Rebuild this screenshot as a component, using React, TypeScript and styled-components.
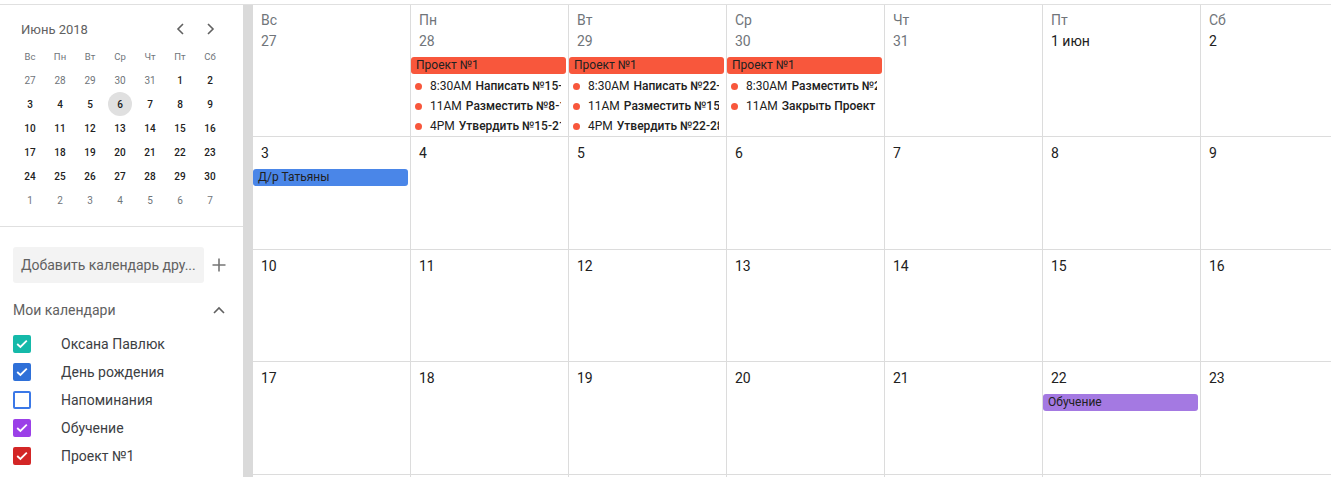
import React from "react";
import styled, { createGlobalStyle } from "styled-components";

const GlobalStyle = createGlobalStyle`
  html, body {
    margin: 0;
    padding: 0;
    background: #fff;
    overflow: hidden;
  }
  body {
    font-family: Roboto, "Noto Sans", Arial, sans-serif;
    color: #3c4043;
  }
`;

const RED = "#f8573c";

type Item = [string, string];
type Bar = { text: string; color: string };
type Day = { label: string; muted?: boolean; bar?: Bar; items?: Item[] };

const weekdays = ["Вс", "Пн", "Вт", "Ср", "Чт", "Пт", "Сб"];

const project: Bar = { text: "Проект №1", color: RED };

const weeks: Day[][] = [
  [
    { label: "27", muted: true },
    {
      label: "28",
      muted: true,
      bar: project,
      items: [
        ["8:30AM", "Написать №15-17"],
        ["11AM", "Разместить №8-14"],
        ["4PM", "Утвердить №15-21"],
      ],
    },
    {
      label: "29",
      muted: true,
      bar: project,
      items: [
        ["8:30AM", "Написать №22-28"],
        ["11AM", "Разместить №15-21"],
        ["4PM", "Утвердить №22-28"],
      ],
    },
    {
      label: "30",
      muted: true,
      bar: project,
      items: [
        ["8:30AM", "Разместить №22-28"],
        ["11AM", "Закрыть Проект №1"],
      ],
    },
    { label: "31", muted: true },
    { label: "1 июн" },
    { label: "2" },
  ],
  [
    { label: "3", bar: { text: "Д/р Татьяны", color: "#4a86e8" } },
    { label: "4" },
    { label: "5" },
    { label: "6" },
    { label: "7" },
    { label: "8" },
    { label: "9" },
  ],
  ["10", "11", "12", "13", "14", "15", "16"].map((label) => ({ label })),
  [
    { label: "17" },
    { label: "18" },
    { label: "19" },
    { label: "20" },
    { label: "21" },
    { label: "22", bar: { text: "Обучение", color: "#a479e2" } },
    { label: "23" },
  ],
  ["24", "25", "26", "27", "28", "29", "30"].map((label) => ({ label })),
];

const miniDays: { d: number; out?: boolean }[][] = [
  [27, 28, 29, 30, 31].map((d) => ({ d, out: true })).concat([{ d: 1 }, { d: 2 }]),
  [3, 4, 5, 6, 7, 8, 9].map((d) => ({ d })),
  [10, 11, 12, 13, 14, 15, 16].map((d) => ({ d })),
  [17, 18, 19, 20, 21, 22, 23].map((d) => ({ d })),
  [24, 25, 26, 27, 28, 29, 30].map((d) => ({ d })),
  [1, 2, 3, 4, 5, 6, 7].map((d) => ({ d, out: true })),
];

const calendars = [
  { name: "Оксана Павлюк", color: "#15b9a9", checked: true },
  { name: "День рождения", color: "#2f70d8", checked: true },
  { name: "Напоминания", color: "#3b78e7", checked: false },
  { name: "Обучение", color: "#9b40e8", checked: true },
  { name: "Проект №1", color: "#d32626", checked: true },
];

/* ---------- layout ---------- */

const Layout = styled.div`
  margin-top: 4px;
  border-top: 1px solid #e0e0e0;
  height: calc(100vh - 5px);
  display: flex;
  overflow: hidden;
`;

const Sidebar = styled.aside`
  width: 243px;
  flex-shrink: 0;
  display: flex;
  flex-direction: column;
`;

const ScrollTrack = styled.div`
  width: 10px;
  flex-shrink: 0;
  background: #dadada;
`;

/* ---------- mini month ---------- */

const MiniMonth = styled.div`
  padding: 12px 0 14px 15px;
  border-bottom: 1px solid #e0e0e0;
`;

const MiniHeader = styled.div`
  height: 24px;
  display: flex;
  align-items: center;
  padding-left: 6px;
  margin-bottom: 3px;
`;

const MonthTitle = styled.span`
  flex: 1;
  font-size: 13px;
  color: #616161;
`;

const NavButtons = styled.div`
  display: flex;
  width: 60px;
  margin-right: 18px;
`;

const NavButton = styled.span`
  width: 30px;
  height: 24px;
  display: flex;
  align-items: center;
  justify-content: center;
`;

const MiniGrid = styled.div`
  display: grid;
  grid-template-columns: repeat(7, 30px);
  grid-auto-rows: 24px;
`;

const MiniHead = styled.span`
  display: flex;
  align-items: center;
  justify-content: center;
  font-size: 9.5px;
  color: #70757a;
`;

const MiniDay = styled.span<{ $out?: boolean; $today?: boolean }>`
  display: flex;
  align-items: center;
  justify-content: center;
  font-size: 10px;
  font-weight: ${(p) => (p.$out ? 400 : 500)};
  color: ${(p) => (p.$out ? "#70757a" : "#212121")};
`;

const DayDisc = styled.span<{ $today?: boolean }>`
  width: 24px;
  height: 24px;
  border-radius: 50%;
  display: flex;
  align-items: center;
  justify-content: center;
  background: ${(p) => (p.$today ? "#e0e0e0" : "transparent")};
`;

/* ---------- calendars list ---------- */

const AddRow = styled.div`
  display: flex;
  align-items: center;
  margin: 20px 0 0 13px;
`;

const AddInput = styled.div`
  width: 191px;
  height: 36px;
  box-sizing: border-box;
  padding-left: 8px;
  display: flex;
  align-items: center;
  background: #f3f3f3;
  border-radius: 3px;
  font-size: 14px;
  color: #616161;
  white-space: nowrap;
`;

const IconSlot = styled.span`
  width: 30px;
  flex-shrink: 0;
  display: flex;
  justify-content: center;
`;

const SectionTitle = styled.div`
  display: flex;
  align-items: center;
  height: 20px;
  margin: 17px 9px 10px 13px;
  font-size: 14px;
  color: #616161;
`;

const SectionLabel = styled.span`
  flex: 1;
`;

const CalRow = styled.label`
  display: flex;
  align-items: center;
  height: 28px;
  padding-left: 13px;
  font-size: 14px;
  color: #3c4043;
`;

const Check = styled.span<{ $color: string; $checked: boolean }>`
  width: 18px;
  height: 18px;
  box-sizing: border-box;
  border-radius: 2px;
  margin-right: 30px;
  display: flex;
  align-items: center;
  justify-content: center;
  background: ${(p) => (p.$checked ? p.$color : "#fff")};
  border: 2px solid ${(p) => p.$color};
`;

/* ---------- month grid ---------- */

const MonthArea = styled.div`
  flex: 1;
  overflow: hidden;
`;

const MonthGrid = styled.div`
  display: grid;
  grid-template-columns: repeat(7, 158px);
  grid-template-rows: 132px 113px 112px 113px 113px;
`;

const Cell = styled.div`
  box-sizing: border-box;
  border-right: 1px solid #dcdcdc;
  border-bottom: 1px solid #dcdcdc;
  padding-top: 7px;
  overflow: hidden;
  min-width: 0;
`;

const Weekday = styled.div`
  padding-left: 8px;
  font-size: 14px;
  line-height: 16px;
  color: #70757a;
  margin-bottom: 4px;
`;

const DateNum = styled.div<{ $muted?: boolean }>`
  padding-left: 8px;
  font-size: 14px;
  line-height: 18px;
  color: ${(p) => (p.$muted ? "#70757a" : "#212121")};
`;

const Events = styled.div`
  margin: 7px 2px 0 0;
`;

const EventBar = styled.div<{ $color: string }>`
  height: 17px;
  line-height: 17px;
  border-radius: 3px;
  padding-left: 5px;
  margin-bottom: 2px;
  background: ${(p) => p.$color};
  font-size: 12px;
  color: #212121;
  white-space: nowrap;
  overflow: hidden;
`;

const EventItem = styled.div`
  display: flex;
  align-items: center;
  height: 20px;
  padding-left: 4px;
  margin-right: 5px;
  font-size: 12px;
  color: #212121;
  white-space: nowrap;
  overflow: hidden;
`;

const EventTitle = styled.span`
  font-weight: 500;
  margin-left: 4px;
`;

const Dot = styled.i`
  width: 7px;
  height: 7px;
  border-radius: 50%;
  background: ${RED};
  flex-shrink: 0;
  margin-right: 8px;
`;

/* ---------- icons ---------- */

const Chevron = ({ dir }: { dir: "left" | "right" | "up" }) => {
  const d =
    dir === "left" ? "M7 1 L2 6 L7 11" : dir === "right" ? "M2 1 L7 6 L2 11" : "M1 7 L6 2 L11 7";
  const size = dir === "up" ? [12, 9] : [9, 12];
  return (
    <svg width={size[0]} height={size[1]} viewBox={`0 0 ${size[0]} ${size[1]}`}>
      <path d={d} fill="none" stroke="#616161" strokeWidth="1.6" />
    </svg>
  );
};

const Plus = () => (
  <svg width="14" height="14" viewBox="0 0 14 14">
    <path d="M7 0.5 V13.5 M0.5 7 H13.5" stroke="#757575" strokeWidth="1.6" />
  </svg>
);

const Tick = () => (
  <svg width="12" height="10" viewBox="0 0 12 10">
    <path d="M1.2 5 L4.4 8 L10.8 1.6" fill="none" stroke="#fff" strokeWidth="1.8" />
  </svg>
);

export default function App() {
  return (
    <>
      <GlobalStyle />
      <Layout>
        <Sidebar>
          <MiniMonth>
            <MiniHeader>
              <MonthTitle>Июнь 2018</MonthTitle>
              <NavButtons>
                <NavButton>
                  <Chevron dir="left" />
                </NavButton>
                <NavButton>
                  <Chevron dir="right" />
                </NavButton>
              </NavButtons>
            </MiniHeader>
            <MiniGrid>
              {weekdays.map((w) => (
                <MiniHead key={w}>{w}</MiniHead>
              ))}
              {miniDays.map((row, r) =>
                row.map((c, i) => (
                  <MiniDay key={`${r}-${i}`} $out={c.out}>
                    <DayDisc $today={r === 1 && c.d === 6}>{c.d}</DayDisc>
                  </MiniDay>
                ))
              )}
            </MiniGrid>
          </MiniMonth>

          <AddRow>
            <AddInput>Добавить календарь дру...</AddInput>
            <IconSlot>
              <Plus />
            </IconSlot>
          </AddRow>

          <SectionTitle>
            <SectionLabel>Мои календари</SectionLabel>
            <IconSlot>
              <Chevron dir="up" />
            </IconSlot>
          </SectionTitle>

          {calendars.map((c) => (
            <CalRow key={c.name}>
              <Check $color={c.color} $checked={c.checked}>
                {c.checked && <Tick />}
              </Check>
              {c.name}
            </CalRow>
          ))}
        </Sidebar>

        <ScrollTrack />

        <MonthArea>
          <MonthGrid>
            {weeks.map((week, r) =>
              week.map((day, i) => (
                <Cell key={`${r}-${i}`}>
                  {r === 0 && <Weekday>{weekdays[i]}</Weekday>}
                  <DateNum $muted={day.muted}>{day.label}</DateNum>
                  {(day.bar || day.items) && (
                    <Events>
                      {day.bar && <EventBar $color={day.bar.color}>{day.bar.text}</EventBar>}
                      {day.items?.map(([time, title]) => (
                        <EventItem key={time}>
                          <Dot />
                          {time}
                          <EventTitle>{title}</EventTitle>
                        </EventItem>
                      ))}
                    </Events>
                  )}
                </Cell>
              ))
            )}
          </MonthGrid>
        </MonthArea>
      </Layout>
    </>
  );
}
